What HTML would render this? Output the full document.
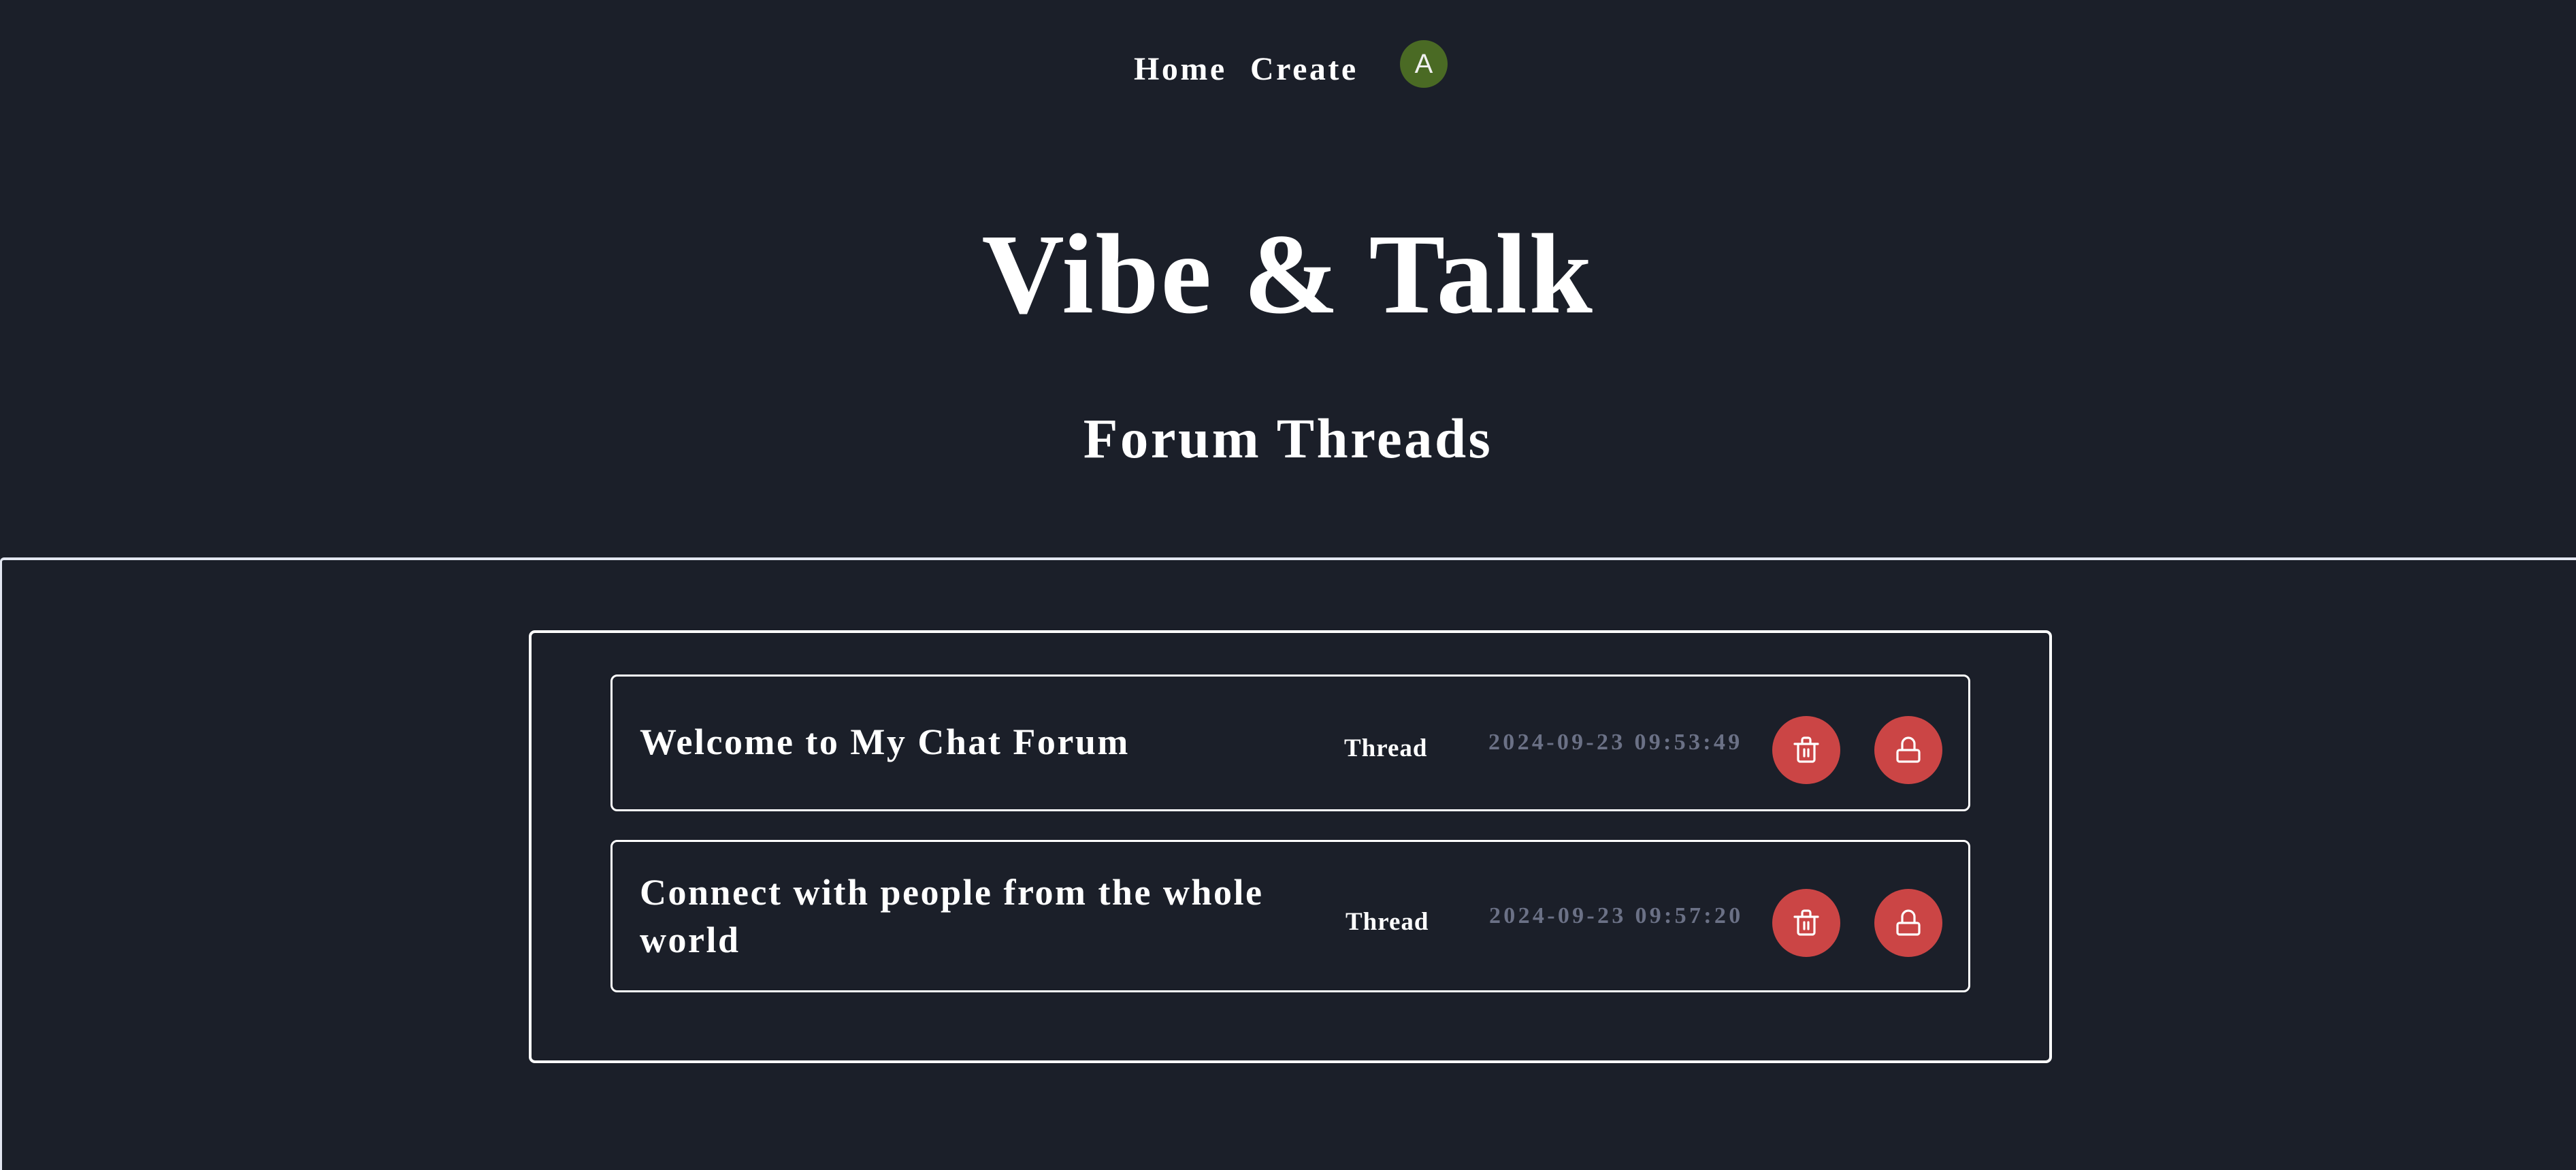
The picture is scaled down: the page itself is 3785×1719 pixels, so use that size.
<!DOCTYPE html>
<html><head><meta charset="utf-8"><style>
html,body{margin:0;padding:0;}
body{width:3785px;height:1660px;background:#1b1f29;position:relative;overflow:hidden;font-family:"Liberation Serif",serif;color:#fff;}
.a{position:absolute;white-space:nowrap;}
.nav{font-family:"Liberation Serif",serif;font-weight:bold;font-size:48px;top:74px;letter-spacing:3.5px;}
.av{left:2057px;top:59px;width:70px;height:70px;border-radius:50%;background:#4a6a24;color:#f0f0f0;font-family:"Liberation Sans",sans-serif;font-size:40px;line-height:70px;text-align:center;}
.section{left:0;top:819px;width:3800px;height:900px;border-top:4px solid #e2e6f0;border-left:3px solid #e2e6f0;border-top-left-radius:6px;box-sizing:border-box;}
.outer{left:777px;top:926px;width:2238px;height:636px;border:4px solid #fff;border-radius:9px;box-sizing:border-box;}
.card{left:897px;width:1998px;border:3px solid #fff;border-radius:10px;box-sizing:border-box;}
.t{font-family:"Liberation Serif",serif;font-weight:bold;font-size:54px;line-height:70px;letter-spacing:2.5px;}
.th{font-family:"Liberation Serif",serif;font-weight:bold;font-size:37px;letter-spacing:1px;}
.dt{font-family:"Liberation Serif",serif;font-weight:bold;font-size:34px;letter-spacing:4.3px;color:#6b7186;}
</style></head><body>
<div class="a nav" style="left:1666px;">Home</div>
<div class="a nav" style="left:1837px;">Create</div>
<div class="a av">A</div>
<div class="a" style="left:0;width:3785px;top:318px;text-align:center;font-weight:bold;font-size:168px;line-height:170px;letter-spacing:2.6px;">Vibe &amp; Talk</div>
<div class="a" style="left:0;width:3785px;top:594px;text-align:center;font-weight:bold;font-size:83px;line-height:100px;letter-spacing:3.4px;">Forum Threads</div>
<div class="a section"></div>
<div class="a outer"></div>

<div class="a card" style="top:991px;height:201px;"></div>
<div class="a t" style="left:940px;top:1055px;">Welcome to My Chat Forum</div>
<div class="a th" style="left:1975px;top:1078px;">Thread</div>
<div class="a dt" style="left:2187px;top:1072px;">2024-09-23 09:53:49</div>

<div class="a card" style="top:1234px;height:224px;"></div>
<div class="a t" style="left:940px;top:1276px;">Connect with people from the whole<br>world</div>
<div class="a th" style="left:1977px;top:1333px;">Thread</div>
<div class="a dt" style="left:2188px;top:1327px;">2024-09-23 09:57:20</div>

<svg class="a" style="left:0;top:0" width="3785" height="1660">
<defs>
<g id="trash" fill="none" stroke="#fff" stroke-width="3.2" stroke-linecap="round" stroke-linejoin="round">
<circle cx="50" cy="50" r="50" fill="#cb4545" stroke="none"/>
<path d="M33 41H67"/>
<path d="M44 41V35a3 3 0 0 1 3-3h6a3 3 0 0 1 3 3v6"/>
<path d="M38 41V64a3 3 0 0 0 3 3h18a3 3 0 0 0 3-3V41"/>
<path d="M47 49V59M53 49V59"/>
</g>
<g id="lock" fill="none" stroke="#fff" stroke-width="3.2" stroke-linecap="round" stroke-linejoin="round">
<circle cx="50" cy="50" r="50" fill="#cb4545" stroke="none"/>
<rect x="34" y="50" width="32" height="17" rx="3"/>
<path d="M41 50V41a9 9 0 0 1 18 0v9"/>
</g>
</defs>
<use href="#trash" x="2604" y="1052"/>
<use href="#lock" x="2754" y="1052"/>
<use href="#trash" x="2604" y="1306"/>
<use href="#lock" x="2754" y="1306"/>
</svg>
</body></html>
